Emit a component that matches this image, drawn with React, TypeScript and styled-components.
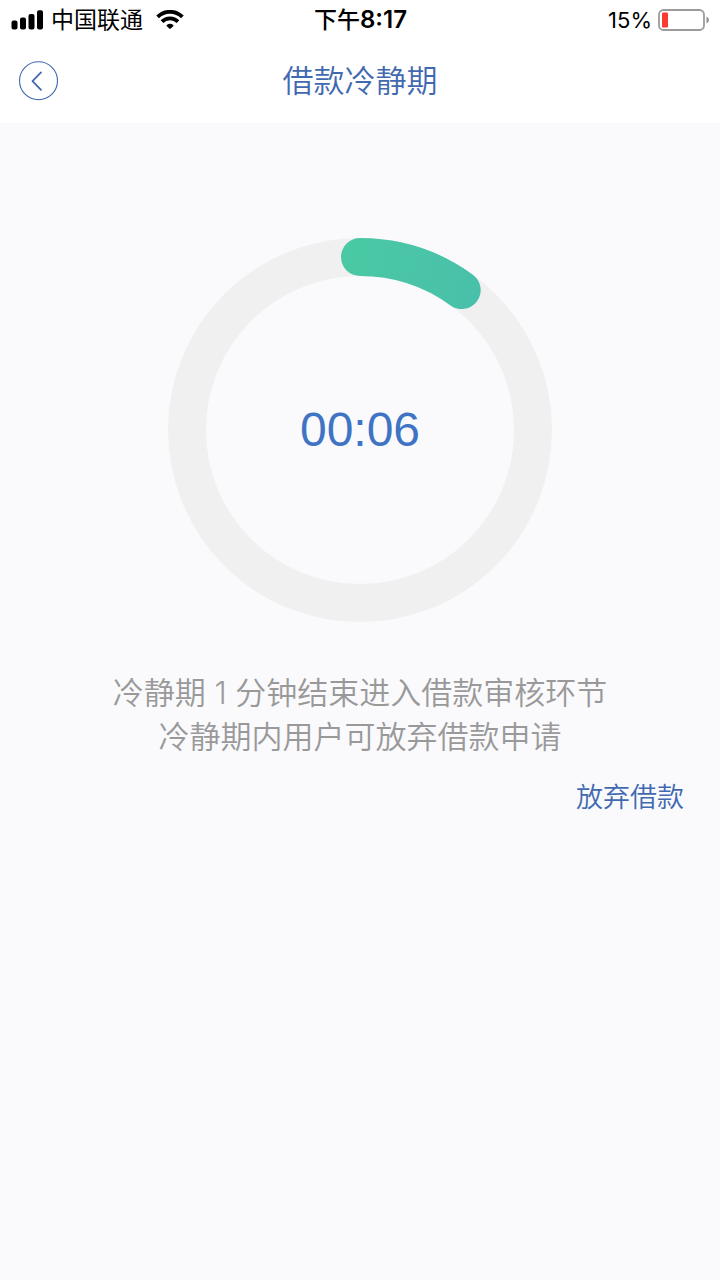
import React from 'react';
import styled, { createGlobalStyle } from 'styled-components';

const GlobalStyle = createGlobalStyle`
  *, *::before, *::after { box-sizing: border-box; }
  html, body { margin: 0; padding: 0; background: #fafafd; }
  body {
    font-family: "Liberation Sans", "Noto Sans CJK SC", sans-serif;
    color: #000;
  }
  p, h1 { margin: 0; font-weight: 350; }
`;

const Screen = styled.div`
  display: flex;
  flex-direction: column;
  min-height: 100vh;
  background: #fafafd;
`;

const StatusBar = styled.div`
  display: grid;
  grid-template-columns: 1fr auto 1fr;
  align-items: center;
  height: 40px;
  padding: 0 10px 0 11px;
  background: #fff;
  font-family: Inter, "Noto Sans CJK SC", sans-serif;
  font-size: 23px;
  line-height: 40px;
`;

const StatusGroup = styled.div<{ $end?: boolean; $gap: number }>`
  display: flex;
  align-items: center;
  justify-content: ${(p) => (p.$end ? 'flex-end' : 'flex-start')};
  gap: ${(p) => p.$gap}px;
`;

const Clock = styled.time`
  font-size: 24px;
  font-weight: 600;
`;

const ClockPeriod = styled.span`
  font-size: 23px;
  font-weight: 500;
`;

const Percent = styled.span`
  font-size: 22px;
`;

const Header = styled.header`
  display: grid;
  grid-template-columns: 1fr auto 1fr;
  align-items: center;
  height: 83px;
  padding: 0 18px 2px;
  background: #fff;
`;

const BackButton = styled.button`
  display: flex;
  width: 40px;
  height: 40px;
  padding: 0;
  border: 0;
  background: none;
  color: #4169b0;
  cursor: pointer;
`;

const Title = styled.h1`
  padding-top: 2px;
  color: #4169b0;
  font-size: 31px;
  line-height: 44px;
`;

const Main = styled.main`
  display: flex;
  flex-direction: column;
  align-items: center;
  padding: 115px 36px 0;
`;

const Dial = styled.div`
  display: grid;
  place-items: center;
  width: 384px;
  height: 384px;

  & > * { grid-area: 1 / 1; }
`;

const Remaining = styled.span`
  color: #3f74c4;
  font-size: 48px;
  line-height: 56px;
`;

const Notice = styled.p`
  margin-top: 49px;
  color: #999;
  font-family: Inter, "Noto Sans CJK SC", sans-serif;
  font-size: 31px;
  line-height: 44px;
  text-align: center;
`;

const CancelLink = styled.a`
  align-self: flex-end;
  margin-top: 21px;
  color: #4169b0;
  font-size: 27px;
  font-weight: 350;
  line-height: 36px;
  text-decoration: none;
`;

const RADIUS = 173;

function SignalIcon() {
  return (
    <svg width="33" height="20" viewBox="0 0 33 20" aria-hidden="true">
      <rect x="0.5" y="10.5" width="6" height="9" rx="2" />
      <rect x="9" y="7.5" width="6" height="12" rx="2" />
      <rect x="17.5" y="4" width="6" height="15.5" rx="2" />
      <rect x="26" y="0.2" width="6" height="19.3" rx="2" />
    </svg>
  );
}

function WifiIcon() {
  return (
    <svg width="28" height="20" viewBox="0 0 28 20" aria-hidden="true">
      <g fill="none" stroke="#000" strokeWidth="3.8">
        <path d="M1.6 6.9 A17.6 17.6 0 0 1 26.4 6.9" />
        <path d="M6 11.6 A11.4 11.4 0 0 1 22 11.6" />
      </g>
      <path d="M13.2 18.4 L10.6 15.9 Q10.2 15.3 10.8 14.9 A5.4 5.4 0 0 1 17.2 14.9 Q17.8 15.3 17.4 15.9 L14.8 18.4 Q14 19.2 13.2 18.4 Z" />
    </svg>
  );
}

function BatteryIcon() {
  return (
    <svg width="52" height="22" viewBox="0 0 52 22" aria-hidden="true">
      <rect x="1" y="1" width="45" height="20" rx="4.5" fill="#fff" stroke="#9b9b9b" strokeWidth="1.8" />
      <rect x="4" y="3.5" width="6" height="15" rx="1.2" fill="#fb3b30" />
      <path d="M48.5 7.5 Q51 8.5 51 11 Q51 13.5 48.5 14.5 Z" fill="#8e8e8e" />
    </svg>
  );
}

function BackIcon() {
  return (
    <svg width="40" height="40" viewBox="0 0 40 40" fill="none" stroke="currentColor" aria-hidden="true">
      <circle cx="20.5" cy="19.7" r="19" strokeWidth="1.1" />
      <path d="M23 11.4 L14.5 20.1 L23 28.8" strokeWidth="1.8" strokeLinecap="round" strokeLinejoin="round" />
    </svg>
  );
}

function ProgressRing({ seconds }: { seconds: number }) {
  const angle = (seconds / 60) * 2 * Math.PI;
  const x = 192 + RADIUS * Math.sin(angle);
  const y = 192 - RADIUS * Math.cos(angle);
  const large = seconds > 30 ? 1 : 0;
  return (
    <svg width="384" height="384" viewBox="0 0 384 384" fill="none" aria-hidden="true">
      <defs>
        <linearGradient id="progress" gradientUnits="userSpaceOnUse" x1="173" y1="19" x2="313" y2="60">
          <stop offset="0" stopColor="#4ac9a4" />
          <stop offset="1" stopColor="#49c0aa" />
        </linearGradient>
      </defs>
      <circle cx="192" cy="192" r={RADIUS} stroke="#f0f0f0" strokeWidth="38" />
      <path
        d={`M192 ${192 - RADIUS} A${RADIUS} ${RADIUS} 0 ${large} 1 ${x} ${y}`}
        stroke="url(#progress)"
        strokeWidth="38"
        strokeLinecap="round"
      />
    </svg>
  );
}

export default function App() {
  return (
    <>
      <GlobalStyle />
      <Screen>
        <StatusBar>
          <StatusGroup $gap={7}>
            <SignalIcon />
            <StatusGroup $gap={13}>
              <span>中国联通</span>
              <WifiIcon />
            </StatusGroup>
          </StatusGroup>
          <Clock>
            <ClockPeriod>下午</ClockPeriod>8:17
          </Clock>
          <StatusGroup $end $gap={6}>
            <Percent>15%</Percent>
            <BatteryIcon />
          </StatusGroup>
        </StatusBar>
        <Header>
          <BackButton type="button" aria-label="返回">
            <BackIcon />
          </BackButton>
          <Title>借款冷静期</Title>
        </Header>
        <Main>
          <Dial>
            <ProgressRing seconds={6} />
            <Remaining role="timer">00:06</Remaining>
          </Dial>
          <Notice>
            冷静期 1 分钟结束进入借款审核环节
            <br />
            冷静期内用户可放弃借款申请
          </Notice>
          <CancelLink href="#cancel">放弃借款</CancelLink>
        </Main>
      </Screen>
    </>
  );
}
